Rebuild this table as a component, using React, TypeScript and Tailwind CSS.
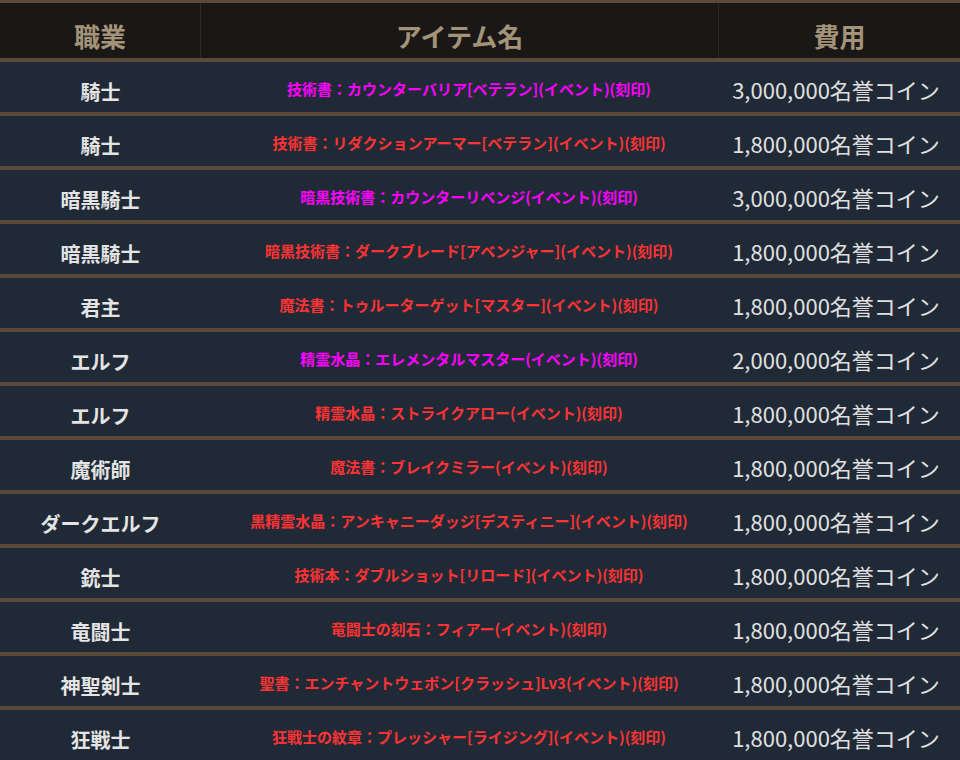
const rows: { job: string; item: string; hot: boolean; cost: string }[] = [
  { job: '騎士', item: '技術書：カウンターバリア[ベテラン](イベント)(刻印)', hot: true, cost: '3,000,000' },
  { job: '騎士', item: '技術書：リダクションアーマー[ベテラン](イベント)(刻印)', hot: false, cost: '1,800,000' },
  { job: '暗黒騎士', item: '暗黒技術書：カウンターリベンジ(イベント)(刻印)', hot: true, cost: '3,000,000' },
  { job: '暗黒騎士', item: '暗黒技術書：ダークブレード[アベンジャー](イベント)(刻印)', hot: false, cost: '1,800,000' },
  { job: '君主', item: '魔法書：トゥルーターゲット[マスター](イベント)(刻印)', hot: false, cost: '1,800,000' },
  { job: 'エルフ', item: '精霊水晶：エレメンタルマスター(イベント)(刻印)', hot: true, cost: '2,000,000' },
  { job: 'エルフ', item: '精霊水晶：ストライクアロー(イベント)(刻印)', hot: false, cost: '1,800,000' },
  { job: '魔術師', item: '魔法書：ブレイクミラー(イベント)(刻印)', hot: false, cost: '1,800,000' },
  { job: 'ダークエルフ', item: '黒精霊水晶：アンキャニーダッジ[デスティニー](イベント)(刻印)', hot: false, cost: '1,800,000' },
  { job: '銃士', item: '技術本：ダブルショット[リロード](イベント)(刻印)', hot: false, cost: '1,800,000' },
  { job: '竜闘士', item: '竜闘士の刻石：フィアー(イベント)(刻印)', hot: false, cost: '1,800,000' },
  { job: '神聖剣士', item: '聖書：エンチャントウェポン[クラッシュ]Lv3(イベント)(刻印)', hot: false, cost: '1,800,000' },
  { job: '狂戦士', item: '狂戦士の紋章：プレッシャー[ライジング](イベント)(刻印)', hot: false, cost: '1,800,000' },
]

const font = "font-['Noto_Sans_CJK_JP','Noto_Sans',sans-serif]"

export default function App() {
  return (
    <div className={`w-[960px] h-[760px] overflow-hidden bg-[#202a37] ${font}`}>
      <div className="border-t-[3px] border-[#5b4a37]">
        <div className="grid grid-cols-[201px_518px_241px] h-[55px] bg-[#1a1717] text-[26px] font-bold text-[#a39378]">
          <div className="flex items-center justify-center pt-[9px] border-r border-[#2c2a28]">職業</div>
          <div className="flex items-center justify-center pt-[9px] border-r border-[#2c2a28]">アイテム名</div>
          <div className="flex items-center justify-center pt-[9px]">費用</div>
        </div>
      </div>
      {rows.map((r, i) => (
        <div key={i} className="grid grid-cols-[201px_518px_241px] h-[54px] border-t-4 border-[#5b4a37]">
          <div className="flex items-center justify-center pt-[9px] text-[20px] font-bold text-[#e4e4e4]">{r.job}</div>
          <div
            className={`flex items-center justify-center pt-[5px] pl-[18px] text-[15px] font-bold ${r.hot ? 'text-[#ff00ff]' : 'text-[#ff3333]'}`}
          >
            {r.item}
          </div>
          <div className="flex items-center justify-center pt-[5px] pr-[7px] text-[22px] text-[#e0e0e0]">
            {r.cost}名誉コイン
          </div>
        </div>
      ))}
    </div>
  )
}
